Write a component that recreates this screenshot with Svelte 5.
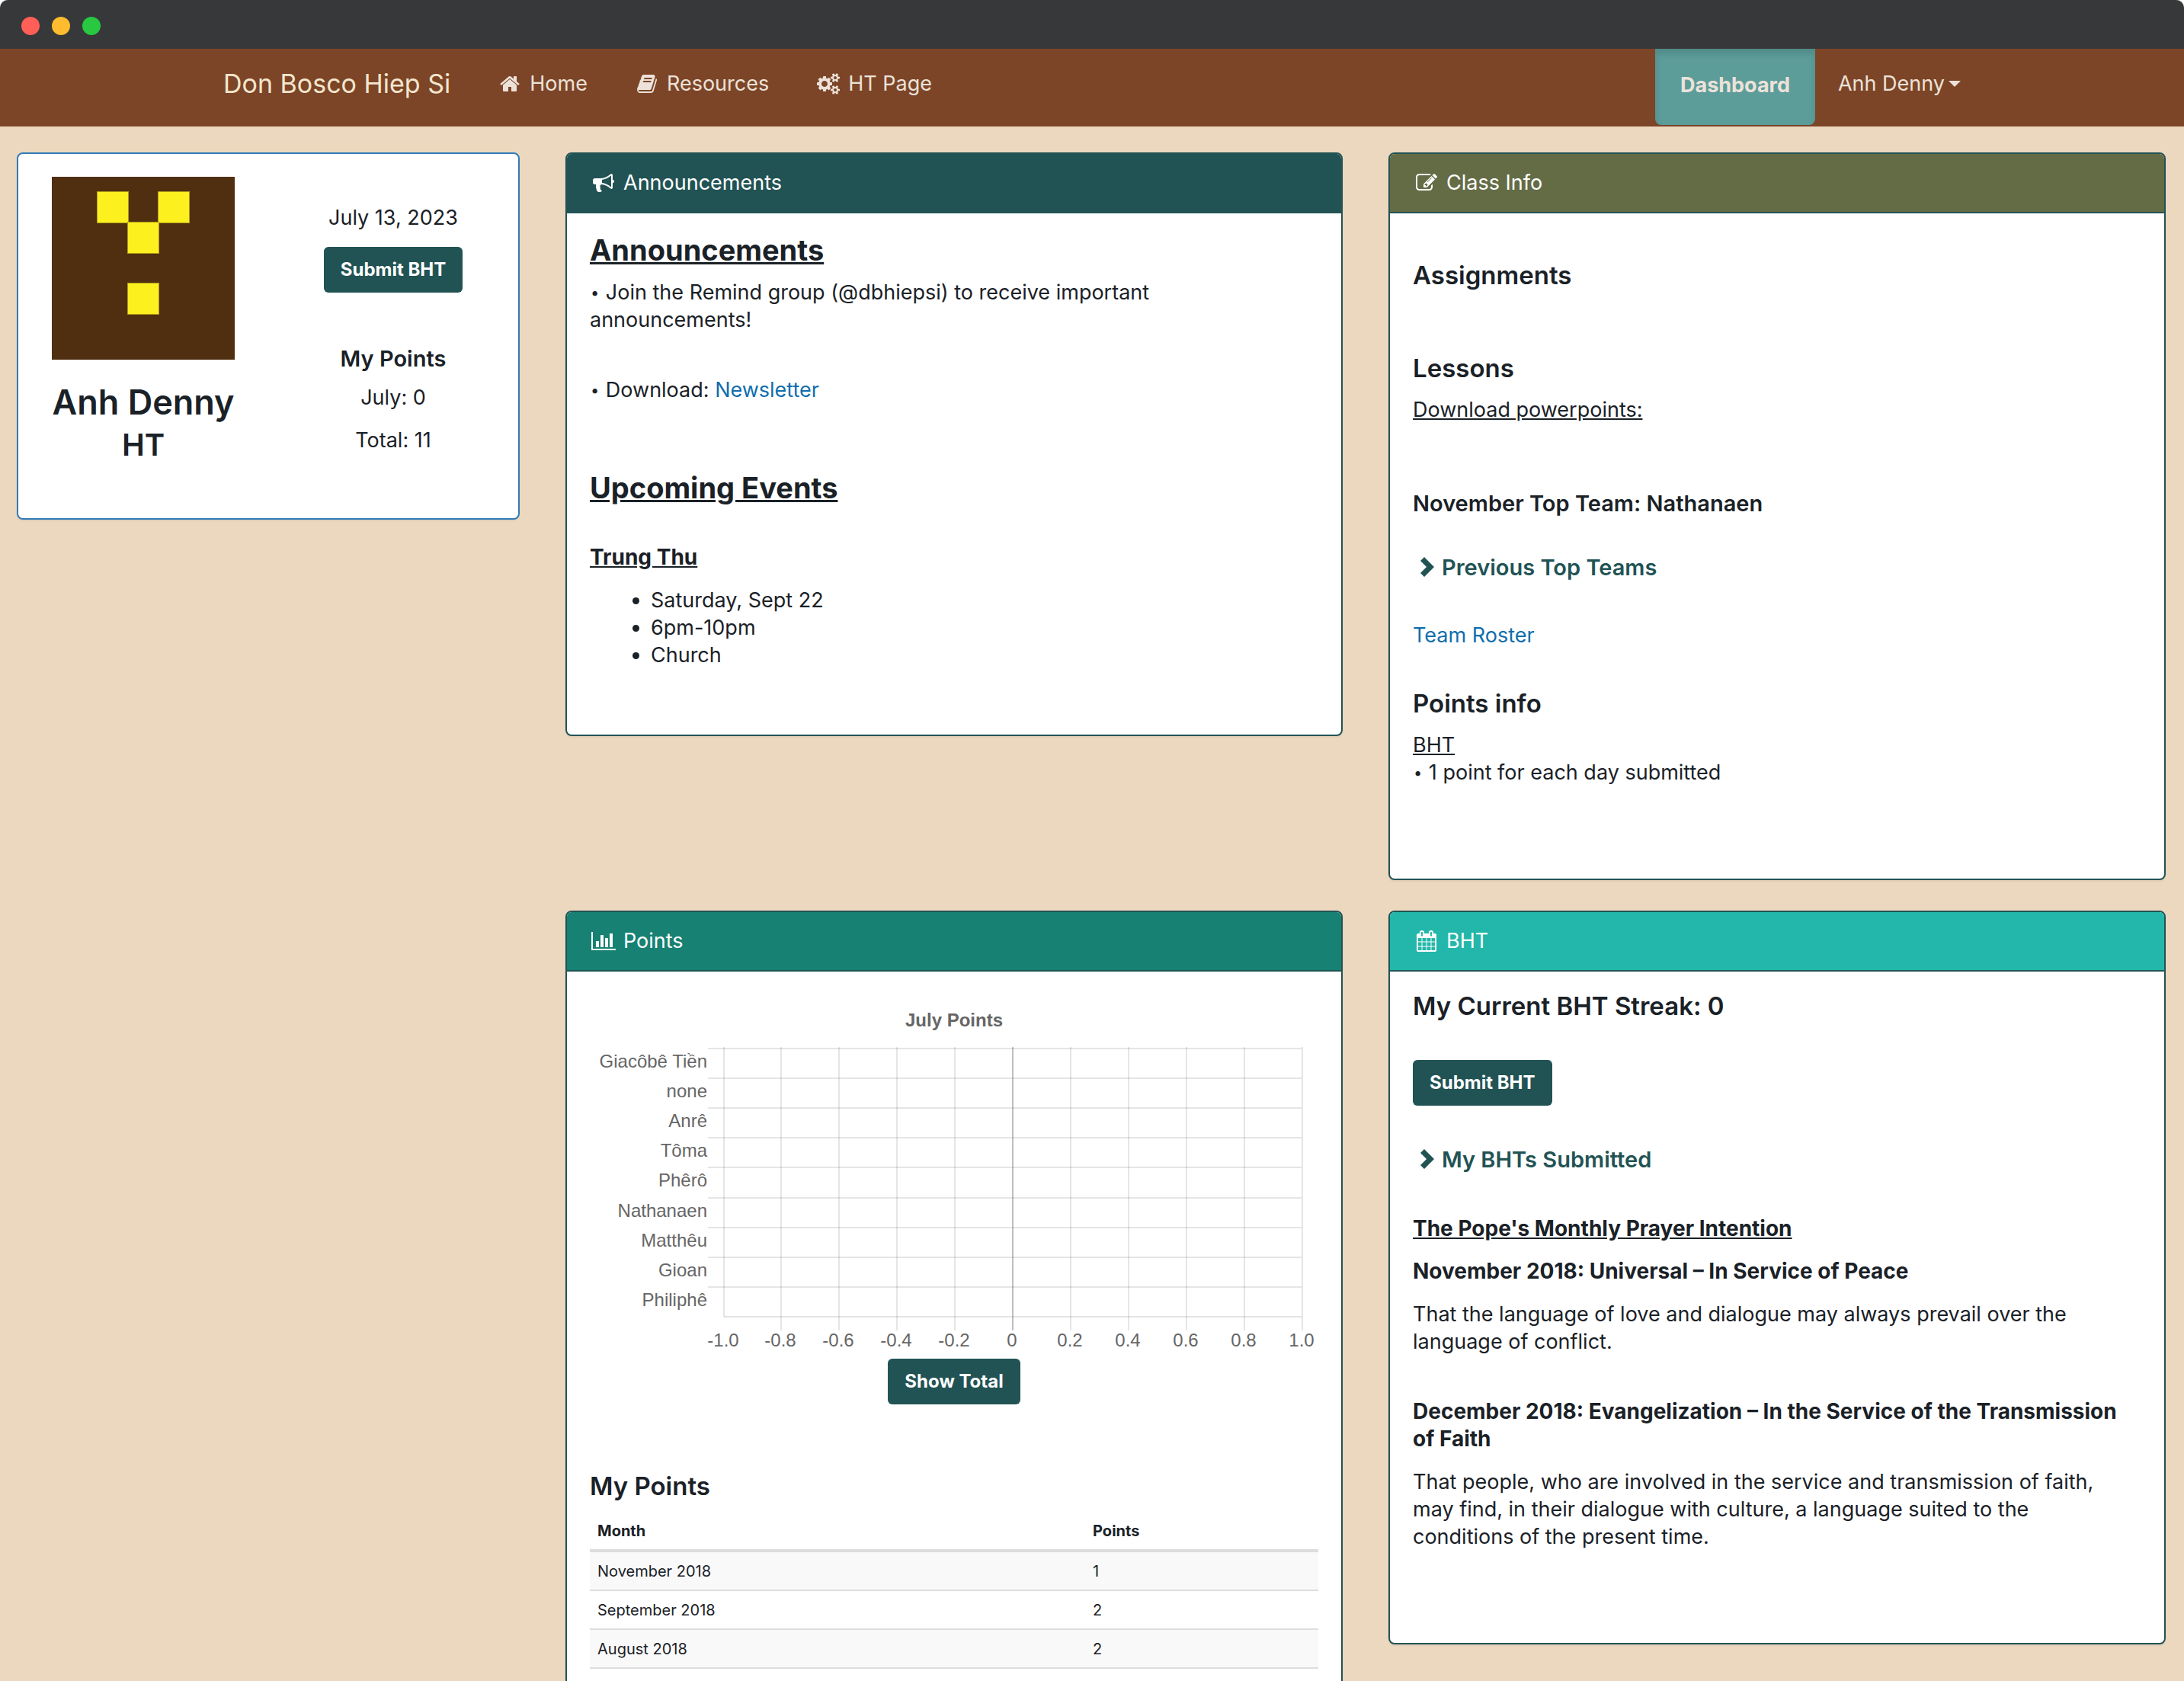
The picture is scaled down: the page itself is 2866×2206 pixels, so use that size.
<script>
  const icons = {
    home: {
      box: '0 0 1792 1792',
      d: 'M1472 992v480q0 26-19 45t-45 19h-384v-384h-256v384h-384q-26 0-45-19t-19-45v-480q0-1 .5-3t.5-3l575-474 575 474q1 2 1 6zm223-69l-62 74q-8 9-21 11h-3q-13 0-21-7l-692-577-692 577q-12 8-24 7-13-2-21-11l-62-74q-8-10-7-23.5t11-21.5l719-599q32-26 76-26t76 26l244 204v-195q0-14 9-23t23-9h192q14 0 23 9t9 23v408l219 182q10 8 11 21.5t-7 23.5z',
    },
    book: {
      box: '0 0 1792 1792',
      d: 'M1703 478q40 57 18 129l-275 906q-19 64-76.5 107.5t-122.5 43.5h-923q-77 0-148.5-53.5t-99.5-131.5q-24-67-2-127 0-4 3-27t4-37q1-8-3-21.5t-3-19.5q2-11 8-21t16.5-23.5 16.5-23.5q23-38 45-91.5t30-91.5q3-10 .5-30t-.5-28q3-11 17-28t17-23q21-36 42-92t25-90q1-9-2.5-32t.5-28q4-13 22-30.5t22-22.5q19-26 42.5-84.5t27.5-96.5q1-8-3-25.5t-2-26.5q2-8 9-18t18-23 17-21q8-12 16.5-30.5t15-35 16-36 19.5-32 26.5-23.5 36-11.5 47.5 5.5l-1 3q38-9 51-9h761q74 0 114 56t18 130l-274 906q-36 119-71.5 153.5t-128.5 34.5h-869q-27 0-38 15-11 16-1 43 24 70 144 70h923q29 0 56-15.5t35-41.5l300-987q7-22 5-57 38 15 59 43zm-1064 2q-4 13 2 22.5t20 9.5h608q13 0 25.5-9.5t16.5-22.5l21-64q4-13-2-22.5t-20-9.5h-608q-13 0-25.5 9.5t-16.5 22.5zm-83 256q-4 13 2 22.5t20 9.5h608q13 0 25.5-9.5t16.5-22.5l21-64q4-13-2-22.5t-20-9.5h-608q-13 0-25.5 9.5t-16.5 22.5z',
    },
    cogs: {
      box: '-64 0 1920 1792',
      d: 'M832 896q0-106-75-181t-181-75-181 75-75 181 75 181 181 75 181-75 75-181zm768 512q0-52-38-90t-90-38-90 38-38 90q0 53 37.5 90.5t90.5 37.5 90.5-37.5 37.5-90.5zm0-1024q0-52-38-90t-90-38-90 38-38 90q0 53 37.5 90.5t90.5 37.5 90.5-37.5 37.5-90.5zm-384 421v185q0 10-7 19.5t-16 10.5l-155 24q-11 35-32 76 34 48 90 115 7 11 7 20 0 12-7 19-23 30-82.5 89.5t-78.5 59.5q-11 0-21-7l-115-90q-37 19-77 31-11 108-23 155-7 24-30 24h-186q-11 0-20-7.5t-10-17.5l-23-153q-34-10-75-31l-118 89q-7 7-20 7-11 0-21-8-144-133-144-160 0-9 7-19 10-14 41-53t47-61q-23-44-35-82l-152-24q-10-1-17-9.5t-7-19.5v-185q0-10 7-19.5t16-10.5l155-24q11-35 32-76-34-48-90-115-7-11-7-20 0-12 7-20 22-30 82-89t79-59q11 0 21 7l115 90q34-18 77-32 11-108 23-154 7-24 30-24h186q11 0 20 7.5t10 17.5l23 153q34 10 75 31l118-89q8-7 20-7 11 0 21 8 144 133 144 160 0 8-7 19-12 16-42 54t-45 60q23 48 34 82l152 23q10 2 17 10.5t7 19.5zm640 533v140q0 16-149 31-12 27-30 52 51 113 51 138 0 4-4 7-122 71-124 71-8 0-46-47t-52-68q-20 2-30 2t-30-2q-14 21-52 68t-46 47q-2 0-124-71-4-3-4-7 0-25 51-138-18-25-30-52-149-15-149-31v-140q0-16 149-31 13-29 30-52-51-113-51-138 0-4 4-7 4-2 35-20t59-34 30-16q8 0 46 46.5t52 67.5q20-2 30-2t30 2q51-71 92-112l6-2q4 0 124 70 4 3 4 7 0 25-51 138 17 23 30 52 149 15 149 31zm0-1024v140q0 16-149 31-12 27-30 52 51 113 51 138 0 4-4 7-122 71-124 71-8 0-46-47t-52-68q-20 2-30 2t-30-2q-14 21-52 68t-46 47q-2 0-124-71-4-3-4-7 0-25 51-138-18-25-30-52-149-15-149-31v-140q0-16 149-31 13-29 30-52-51-113-51-138 0-4 4-7 4-2 35-20t59-34 30-16q8 0 46 46.5t52 67.5q20-2 30-2t30 2q51-71 92-112l6-2q4 0 124 70 4 3 4 7 0 25-51 138 17 23 30 52 149 15 149 31z',
    },
    bullhorn: {
      box: '0 0 1792 1792',
      d: 'M1664 640q53 0 90.5 37.5t37.5 90.5-37.5 90.5-90.5 37.5v384q0 52-38 90t-90 38q-417-347-812-380-58 19-91 66t-31 100.5 40 92.5q-20 33-23 65.5t6 58 33.5 55 48 50 61.5 50.5q-29 58-111.5 83t-168.5 11.5-132-55.5q-7-23-29.5-87.5t-32-94.5-23-89-15-101 3.5-98.5 22-110.5h-122q-66 0-113-47t-47-113v-192q0-66 47-113t113-47h480q435 0 896-384 52 0 90 38t38 90v384zm-128 604v-954q-394 302-768 343v270q377 42 768 341z',
    },
    edit: {
      box: '0 0 1792 1792',
      d: 'M888 1184l116-116-152-152-116 116v56h96v96h56zm440-720q-16-16-33 1l-350 350q-17 17-1 33t33-1l350-350q17-17 1-33zm80 594v190q0 119-84.5 203.5t-203.5 84.5h-832q-119 0-203.5-84.5t-84.5-203.5v-832q0-119 84.5-203.5t203.5-84.5h832q63 0 117 25 15 7 18 23 3 17-9 29l-49 49q-14 14-32 8-23-6-45-6h-832q-66 0-113 47t-47 113v832q0 66 47 113t113 47h832q66 0 113-47t47-113v-126q0-13 9-22l64-64q15-15 35-7t20 29zm-96-738l288 288-672 672h-288v-288zm444 132l-92 92-288-288 92-92q28-28 68-28t68 28l152 152q28 28 28 68t-28 68z',
    },
    chart: {
      box: '0 0 2048 1792',
      d: 'M640 896v512h-256v-512h256zm384-512v1024h-256v-1024h256zm1024 1152v128h-2048v-1536h128v1408h1920zm-640-896v768h-256v-768h256zm384-384v1152h-256v-1152h256z',
    },
    calendar: {
      box: '0 0 1792 1792',
      d: 'M192 1664h288v-288h-288v288zm352 0h320v-288h-320v288zm-352-352h288v-320h-288v320zm352 0h320v-320h-320v320zm-352-384h288v-288h-288v288zm736 736h320v-288h-320v288zm-384-736h320v-288h-320v288zm768 736h288v-288h-288v288zm-384-352h320v-320h-320v320zm-352-864v-288q0-13-9.5-22.5t-22.5-9.5h-64q-13 0-22.5 9.5t-9.5 22.5v288q0 13 9.5 22.5t22.5 9.5h64q13 0 22.5-9.5t9.5-22.5zm736 864h288v-320h-288v320zm-384-384h320v-288h-320v288zm384 0h288v-288h-288v288zm32-480v-288q0-13-9.5-22.5t-22.5-9.5h-64q-13 0-22.5 9.5t-9.5 22.5v288q0 13 9.5 22.5t22.5 9.5h64q13 0 22.5-9.5t9.5-22.5zm384-64v1280q0 52-38 90t-90 38h-1408q-52 0-90-38t-38-90v-1280q0-52 38-90t90-38h128v-96q0-66 47-113t113-47h64q66 0 113 47t47 113v96h384v-96q0-66 47-113t113-47h64q66 0 113 47t47 113v96h128q52 0 90 38t38 90z',
    },
  };

  const navLinks = [
    { icon: 'home', label: 'Home' },
    { icon: 'book', label: 'Resources' },
    { icon: 'cogs', label: 'HT Page' },
  ];

  const teams = ['Giacôbê Tiền', 'none', 'Anrê', 'Tôma', 'Phêrô', 'Nathanaen', 'Matthêu', 'Gioan', 'Philiphê'];
  const ticks = ['-1.0', '-0.8', '-0.6', '-0.4', '-0.2', '0', '0.2', '0.4', '0.6', '0.8', '1.0'];
  const plot = { left: 176, right: 935, top: 73, bottom: 425 };
  const rowY = (i) => Math.round(plot.top + ((plot.bottom - plot.top) / teams.length) * i);
  const tickX = (i) => Math.floor(plot.left + ((plot.right - plot.left) / (ticks.length - 1)) * i);

  const months = [
    { month: 'November 2018', points: 1 },
    { month: 'September 2018', points: 2 },
    { month: 'August 2018', points: 2 },
  ];
</script>

{#snippet icon(name)}
  <svg class="icon" viewBox={icons[name].box} aria-hidden="true"><path d={icons[name].d} /></svg>
{/snippet}

{#snippet chevron()}
  <svg class="chevron" viewBox="0 0 38 30" aria-hidden="true"><path d="M15 1l13 13-13 13-5-5 8-8-8-8z" /></svg>
{/snippet}

<div class="window">
  <div class="titlebar">
    <span class="light red"></span>
    <span class="light amber"></span>
    <span class="light green"></span>
  </div>

  <nav class="navbar">
    <div class="container">
      <a class="brand" href="#top">Don Bosco Hiep Si</a>
      {#each navLinks as link}
        <a class="link" href="#top">{@render icon(link.icon)}{link.label}</a>
      {/each}
      <div class="right">
        <a class="dashboard" href="#top">Dashboard</a>
        <button class="link user" type="button">Anh Denny<span class="caret"></span></button>
      </div>
    </div>
  </nav>

  <main class="grid">
    <section class="card profile">
      <div class="col">
        <svg class="avatar" viewBox="0 0 240 240" role="img" aria-label="Anh Denny avatar">
          <rect width="240" height="240" fill="#502f10" />
          <g fill="#fcf01f" stroke="#b09a1a" stroke-width="1">
            <rect x="59.5" y="19.5" width="41" height="41" />
            <rect x="139.5" y="19.5" width="41" height="41" />
            <rect x="99.5" y="59.5" width="41" height="41" />
            <rect x="99.5" y="139.5" width="41" height="41" />
          </g>
        </svg>
        <h1>Anh Denny</h1>
        <h2 class="role">HT</h2>
      </div>
      <div class="col today">
        <p>July 13, 2023</p>
        <button class="btn" type="button">Submit BHT</button>
        <h4>My Points</h4>
        <p class="s16">July: 0</p>
        <p class="s20">Total: 11</p>
      </div>
    </section>

    <section class="card">
      <header class="dark">{@render icon('bullhorn')}Announcements</header>
      <div class="body news">
        <h2><u>Announcements</u></h2>
        <p class="s16"><span class="dot">•</span> Join the Remind group (@dbhiepsi) to receive important<br />announcements!</p>
        <p class="s56"><span class="dot">•</span> Download: <a href="#top">Newsletter</a></p>
        <h2 class="s88"><u>Upcoming Events</u></h2>
        <p class="s52"><strong><u>Trung Thu</u></strong></p>
        <ul class="s20">
          <li>Saturday, Sept 22</li>
          <li>6pm-10pm</li>
          <li>Church</li>
        </ul>
      </div>
    </section>

    <section class="card">
      <header class="olive">{@render icon('edit')}Class Info</header>
      <div class="body tall">
        <h3 class="s36">Assignments</h3>
        <h3 class="s84">Lessons</h3>
        <p class="s18"><u>Download powerpoints:</u></p>
        <h4 class="s88">November Top Team: Nathanaen</h4>
        <h4 class="s50"><button class="toggle" type="button">{@render chevron()}Previous Top Teams</button></h4>
        <p class="s54"><a href="#top">Team Roster</a></p>
        <h3 class="s52">Points info</h3>
        <p class="s18"><u>BHT</u><br /><span class="dot">•</span> 1 point for each day submitted</p>
      </div>
    </section>

    <section class="card points">
      <header class="green-head">{@render icon('chart')}Points</header>
      <div class="body">
        <svg class="chart" viewBox="0 -2 956 482" role="img" aria-label="July Points by team">
          <text class="title" x="478" y="44">July Points</text>
          <g class="lines">
            {#each teams as team, i}
              <line x1="155" x2="934" y1={rowY(i)} y2={rowY(i)} />
            {/each}
            <line x1="176" x2="934" y1={plot.bottom} y2={plot.bottom} />
            {#each ticks as tick, i}
              <line class:zero={tick === '0'} x1={tickX(i)} x2={tickX(i)} y1="71" y2={i === 0 ? plot.bottom : 443} />
            {/each}
          </g>
          {#each teams as team, i}
            <text class="team" x="154" y={rowY(i) + 25}>{team}</text>
          {/each}
          {#each ticks as tick, i}
            <text class="tick" x={tickX(i) - 1} y="464">{tick}</text>
          {/each}
        </svg>
        <div class="center"><button class="btn" type="button">Show Total</button></div>
        <h3 class="s88">My Points</h3>
        <table>
          <thead>
            <tr><th scope="col">Month</th><th scope="col">Points</th></tr>
          </thead>
          <tbody>
            {#each months as row}
              <tr><td>{row.month}</td><td>{row.points}</td></tr>
            {/each}
          </tbody>
        </table>
      </div>
    </section>

    <section class="card">
      <header class="teal">{@render icon('calendar')}BHT</header>
      <div class="body tall">
        <h3>My Current BHT Streak: 0</h3>
        <button class="btn s52" type="button">Submit BHT</button>
        <h4 class="s54"><button class="toggle" type="button">{@render chevron()}My BHTs Submitted</button></h4>
        <p class="s56"><strong><u>The Pope's Monthly Prayer Intention</u></strong></p>
        <p class="s20"><strong>November 2018: Universal – In Service of Peace</strong></p>
        <p class="s20">That the language of love and dialogue may always prevail over the language of conflict.</p>
        <p class="s56"><strong>December 2018: Evangelization – In the Service of the Transmission of Faith</strong></p>
        <p class="s20 narrow">That people, who are involved in the service and transmission of faith, may find, in their dialogue with culture, a language suited to the conditions of the present time.</p>
      </div>
    </section>
  </main>
</div>

<style>
  :global(body) {
    margin: 0;
    background: #fff;
  }
  .window {
    height: 100vh;
    display: flex;
    flex-direction: column;
    overflow: hidden;
    border-radius: 10px 10px 0 0;
    background: #ecd8bf;
    color: #1a2127;
    font: 27px/36px Inter, "Liberation Sans", sans-serif;
  }
  .titlebar {
    flex: none;
    height: 64px;
    display: flex;
    align-items: center;
    gap: 16px;
    padding: 4px 28px 0;
    box-sizing: border-box;
    background: #37383a;
  }
  .light {
    width: 24px;
    height: 24px;
    border-radius: 50%;
  }
  .red { background: #ff5f57; }
  .amber { background: #febc2e; }
  .green { background: #28c840; }

  .navbar {
    flex: none;
    background: #7c4527;
  }
  .container {
    max-width: 2340px;
    height: 102px;
    margin: 0 auto;
    display: flex;
    align-items: flex-start;
  }
  .brand,
  .link {
    display: flex;
    align-items: center;
    padding: 28px 30px 0;
    color: #ece2d9;
    text-decoration: none;
    white-space: nowrap;
  }
  .brand {
    font-size: 34px;
    color: #f3e6cd;
  }
  button {
    font: inherit;
    border: 0;
    cursor: pointer;
  }
  .user {
    background: none;
  }
  .right {
    display: flex;
    align-items: flex-start;
    margin-left: auto;
  }
  .dashboard {
    padding: 30px 33px 34px;
    border-radius: 0 0 8px 8px;
    background: #5c9d9a;
    box-shadow: inset 0 6px 10px rgba(0, 0, 0, 0.125);
    color: #ece2d9;
    font-weight: 700;
    text-decoration: none;
  }
  .caret {
    margin-left: 5px;
    border: 8px solid transparent;
    border-top-color: currentColor;
    border-bottom: 0;
  }
  .icon {
    width: 36px;
    height: 28px;
    margin-right: 8px;
    fill: currentColor;
  }

  .grid {
    flex: 1;
    min-height: 0;
    display: grid;
    grid-template-columns: 660fr 1020fr 1020fr;
    align-content: start;
    align-items: start;
    gap: 40px 60px;
    padding: 34px 24px 0 22px;
  }
  .card {
    border: 2px solid #225354;
    border-radius: 8px;
    background: #fff;
    box-shadow: 0 2px 2px rgba(0, 0, 0, 0.05);
    overflow: hidden;
  }
  .points {
    grid-column: 2;
  }
  header {
    display: flex;
    align-items: center;
    padding: 20px 30px;
    border-bottom: 2px solid #225354;
    color: #fff;
  }
  .dark { background: #225354; }
  .olive { background: #646c46; }
  .green-head { background: #178173; }
  .teal { background: #22b7aa; }
  .body {
    padding: 26px 30px 60px;
  }
  .news { padding-bottom: 86px; }
  .tall { padding-bottom: 121px; }

  h1, h2, h3, h4, p, ul {
    margin: 0;
  }
  h1 { font-size: 45px; line-height: 52px; font-weight: 600; }
  h2 { font-size: 38px; line-height: 44px; font-weight: 700; }
  h3 { font-size: 33px; line-height: 38px; font-weight: 600; }
  h4 { font-size: 29px; line-height: 34px; font-weight: 600; }
  strong { font-size: 28px; line-height: 1; font-weight: 700; }
  .body a {
    color: #0f6ead;
    text-decoration: none;
  }
  ul { padding-left: 80px; }
  .dot {
    margin: 0 1px;
    font-size: 20px;
    line-height: 1;
    vertical-align: 2px;
  }

  .s16 { margin-top: 16px; }
  .s18 { margin-top: 18px; }
  .s20 { margin-top: 20px; }
  .s36 { margin-top: 36px; }
  .s50 { margin-top: 50px; }
  .s52 { margin-top: 52px; }
  .s54 { margin-top: 54px; }
  .s56 { margin-top: 56px; }
  .s84 { margin-top: 84px; }
  .s88 { margin-top: 88px; }
  .narrow { padding-right: 30px; }

  .btn {
    display: block;
    padding: 12px 22px;
    border-radius: 6px;
    background: #225354;
    color: #fff;
    font-size: 24px;
    font-weight: 700;
  }
  .center {
    display: flex;
    justify-content: center;
  }
  .toggle {
    display: flex;
    align-items: center;
    padding: 0;
    background: none;
    color: #225354;
  }
  .chevron {
    width: 38px;
    height: 30px;
    fill: currentColor;
  }

  .profile {
    display: grid;
    grid-template-columns: 1fr 1fr;
    padding: 30px 0 74px;
    border-color: #337ab7;
  }
  .col {
    display: flex;
    flex-direction: column;
    align-items: center;
    text-align: center;
  }
  .avatar {
    width: 240px;
    height: 240px;
    margin-bottom: 30px;
  }
  .role {
    margin-top: 8px;
    font-size: 40px;
    font-weight: 600;
  }
  .today { padding-top: 36px; }
  .today .btn { margin: 20px 0 70px; }

  .chart {
    display: block;
    width: 100%;
    font: 24px "Liberation Sans", Arial, sans-serif;
    fill: #666;
  }
  .title {
    font-weight: 700;
    text-anchor: middle;
  }
  .team { text-anchor: end; }
  .tick { text-anchor: middle; }
  .lines {
    stroke: rgba(0, 0, 0, 0.1);
    stroke-width: 2;
  }
  .zero { stroke: rgba(0, 0, 0, 0.25); }

  table {
    width: 100%;
    margin-top: 16px;
    border-collapse: separate;
    border-spacing: 0;
    table-layout: fixed;
    font-size: 20px;
    line-height: 28px;
  }
  th, td {
    padding: 10px;
    border-bottom: 2px solid #ddd;
    text-align: left;
  }
  td { padding-top: 11px; }
  th:first-child { width: 68%; box-sizing: border-box; }
  th {
    border-bottom-width: 4px;
    font-weight: 700;
  }
  tbody tr:nth-child(odd) { background: #f9f9f9; }
</style>
